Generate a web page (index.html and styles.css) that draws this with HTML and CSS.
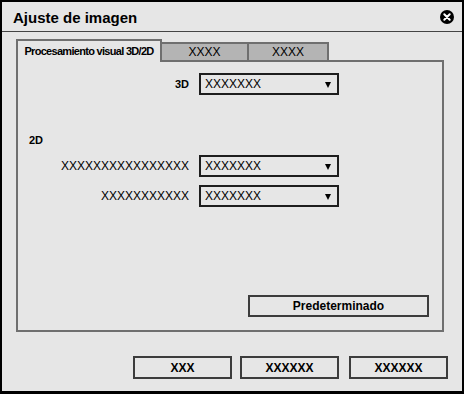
FILE: index.html
```html
<!DOCTYPE html>
<html>
<head>
<meta charset="utf-8"/>
<title>Ajuste de imagen</title>
<link rel="stylesheet" href="styles.css">
</head>
<body>
  <div class="dialog">
    <div class="titlebar">
      <span class="title">Ajuste de imagen</span>
      <svg class="close" width="14" height="14" viewBox="0 0 14 14">
        <circle cx="7" cy="7" r="7" fill="#000"/>
        <path d="M4.3 4.3 L9.7 9.7 M9.7 4.3 L4.3 9.7" stroke="#fff" stroke-width="2" stroke-linecap="round"/>
      </svg>
    </div>
    <div class="content">
      <div class="tabs">
        <div class="tab tab_active">Procesamiento visual 3D/2D</div>
        <div class="tab tab_first">XXXX</div>
        <div class="tab tab_second">XXXX</div>
      </div>
      <div class="panel">
        <div class="row row_3d">
          <span class="label label_bold">3D</span>
          <div class="select"><span>XXXXXXX</span><i class="arrow"></i></div>
        </div>
        <div class="section">2D</div>
        <div class="row row_first">
          <span class="label">XXXXXXXXXXXXXXXX</span>
          <div class="select"><span>XXXXXXX</span><i class="arrow"></i></div>
        </div>
        <div class="row row_second">
          <span class="label">XXXXXXXXXXX</span>
          <div class="select"><span>XXXXXXX</span><i class="arrow"></i></div>
        </div>
        <button class="btn btn_default">Predeterminado</button>
      </div>
      <div class="footer">
        <button class="btn btn_ok">XXX</button>
        <button class="btn btn_mid">XXXXXX</button>
        <button class="btn btn_last">XXXXXX</button>
      </div>
    </div>
  </div>
</body>
</html>
```

FILE: styles.css
```css
*{
  padding:0;
  margin:0;
  box-sizing:border-box;
}
body{
  font-family:"Liberation Sans", Arial, sans-serif;
  color:#000;
  background:#e6e6e6;
}
.dialog{
  width:464px;
  height:394px;
  border:2px solid #000;
  border-bottom-width:3px;
  background:#e6e6e6;
}
.titlebar{
  height:30px;
  display:flex;
  align-items:center;
  justify-content:space-between;
  padding:1px 8px 0 11px;
  border-bottom:1px solid #444;
}
.title{
  font-size:15px;
  font-weight:bold;
}
.close{
  display:block;
  margin-top:0px;
}
.content{
  padding:7px 0 0 14px;
}
.tabs{
  display:flex;
  align-items:flex-end;
  height:21px;
}
.tab{
  background:#b4b4b4;
  border-top:2px solid #6f6f6f;
  border-right:2px solid #6f6f6f;
  height:18px;
  font-size:12px;
  text-align:center;
  line-height:16px;
}
.tab_active{
  position:relative;
  z-index:2;
  width:146px;
  height:23px;
  margin-bottom:-2px;
  background:#e6e6e6;
  border-left:2px solid #6f6f6f;
  font-size:11px;
  font-weight:bold;
  letter-spacing:-0.7px;
  line-height:19px;
  padding-top:1px;
}
.tab_first{
  width:87px;
}
.tab_second{
  width:80px;
}
.panel{
  position:relative;
  width:428px;
  height:272px;
  border:2px solid #6f6f6f;
  display:flex;
  flex-direction:column;
  padding:11px 0 13px 0;
}
.row{
  display:grid;
  grid-template-columns:171px 140px;
  column-gap:10px;
  align-items:center;
  height:22px;
}
.row_first{
  margin-top:7px;
}
.row_second{
  margin-top:8px;
}
.label{
  text-align:right;
  font-size:12px;
}
.label_bold{
  font-weight:bold;
  font-size:11px;
}
.section{
  margin:38px 0 0 11px;
  font-size:11px;
  font-weight:bold;
  line-height:15px;
}
.select{
  height:22px;
  border:2px solid #1e1e1e;
  display:flex;
  align-items:center;
  justify-content:space-between;
  padding:0 6px 0 4px;
  font-size:12px;
}
.arrow{
  width:0;
  height:0;
  border-top:6px solid #000;
  border-left:3.5px solid transparent;
  border-right:3.5px solid transparent;
  margin-top:1px;
}
.btn{
  font-family:"Liberation Sans", Arial, sans-serif;
  font-size:12px;
  font-weight:bold;
  color:#000;
  background:#e6e6e6;
  border:2px solid #3c3c3c;
  height:22px;
}
.btn_default{
  margin-top:auto;
  align-self:flex-end;
  width:181px;
  margin-right:13px;
}
.footer{
  display:flex;
  justify-content:flex-end;
  padding-right:14px;
  margin-top:24px;
}
.footer .btn{
  height:23px;
  width:99px;
}
.btn_mid{
  margin-left:8px;
}
.btn_last{
  margin-left:10px;
}
```
